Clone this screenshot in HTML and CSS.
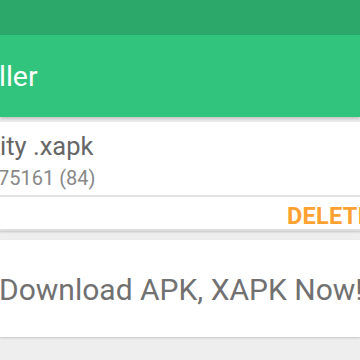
FILE: index.html
```html
<!DOCTYPE html>
<html>
<head>
<meta charset="utf-8">
<link rel="stylesheet" href="styles.css">
</head>
<body>
<div class="screen">
  <div class="status"></div>
  <header class="toolbar"><span class="title">ller</span></header>
  <div class="content">
    <section class="card file">
      <div class="file-info">
        <div class="file-name">ity .xapk</div>
        <div class="file-meta">75161 (84)</div>
      </div>
      <div class="actions"><span class="delete">DELETE</span></div>
    </section>
    <section class="card promo">
      <div class="promo-text">Download APK, XAPK Now!</div>
    </section>
  </div>
</div>
</body>
</html>
```
FILE: styles.css
```css
html, body {
  margin: 0;
  padding: 0;
}
body {
  width: 360px;
  height: 360px;
  overflow: hidden;
  background: #eeeeee;
  font-family: Roboto, "Liberation Sans", sans-serif;
}
.screen {
  display: flex;
  flex-direction: column;
}
.status {
  height: 35px;
  background: #2ca86b;
}
.toolbar {
  height: 82px;
  background: #31c47c;
  box-sizing: border-box;
  padding-top: 25px;
  box-shadow: 0 2px 3px rgba(0,0,0,0.18);
  position: relative;
  z-index: 1;
}
.title {
  display: block;
  color: #ffffff;
  font-size: 28.5px;
  line-height: 34px;
  white-space: nowrap;
  margin-left: -1px;
}
.content {
  padding-top: 5px;
  display: flex;
  flex-direction: column;
  gap: 9px;
}
.card {
  background: #ffffff;
  box-shadow: 0 1px 2px rgba(0,0,0,0.18);
}
.file-info {
  height: 75px;
  box-sizing: border-box;
  padding-top: 9px;
  border-bottom: 2px solid #e2e2e2;
}
.file-name {
  color: #666666;
  font-size: 25.5px;
  line-height: 30px;
  white-space: nowrap;
}
.file-meta {
  color: #888888;
  font-size: 20px;
  line-height: 24px;
  margin-top: 5px;
  white-space: nowrap;
  margin-left: -2px;
}
.actions {
  height: 32px;
  box-sizing: content-box;
  display: flex;
  align-items: center;
  padding-left: 287px;
  border-bottom: 2px solid #dddddd;
  white-space: nowrap;
  overflow: hidden;
}
.delete {
  color: #ffa232;
  font-weight: bold;
  font-size: 23.5px;
  line-height: 26px;
  padding-top: 6px;
  letter-spacing: 0.3px;
}
.promo {
  height: 97px;
  display: flex;
  align-items: center;
  overflow: hidden;
}
.promo-text {
  color: #717171;
  font-size: 30px;
  white-space: nowrap;
  padding-top: 2px;
  margin-left: -1px;
}
```
